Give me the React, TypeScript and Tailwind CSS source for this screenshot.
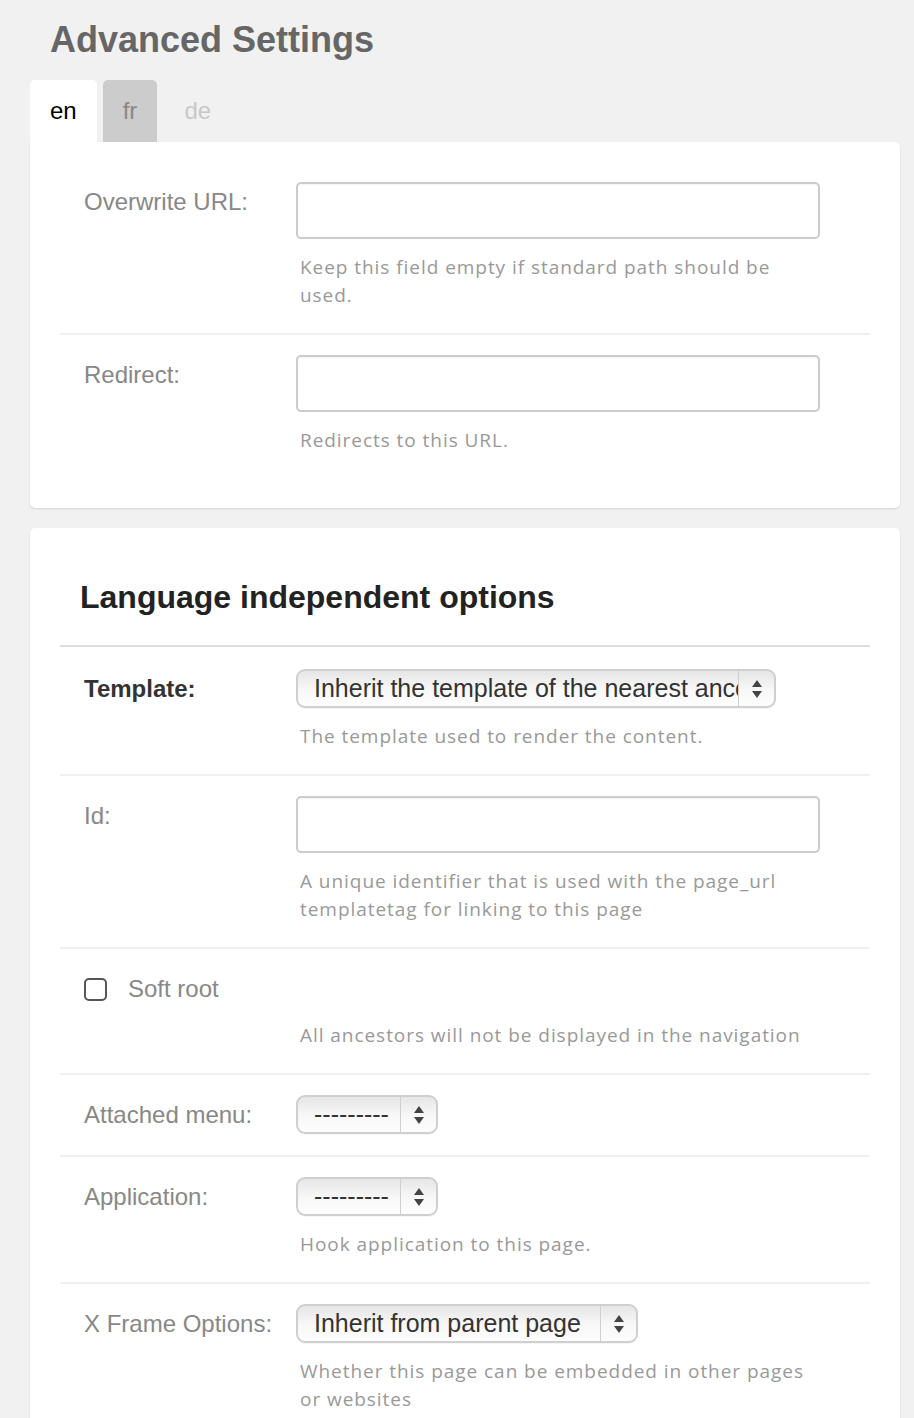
import { ReactNode } from 'react';

// ─── Shared bits ──────────────────────────────────────────────────────────────

const sans = "font-['Liberation_Sans',Arial,sans-serif]";
const helpFont = "font-['Open_Sans',sans-serif]";

function Help({ children, mt = 'mt-[14px]' }: { children: ReactNode; mt?: string }) {
    return (
        <p
            className={`${helpFont} ml-1 ${mt} w-[512px] text-[19px] leading-[28px] tracking-[0.95px] text-[#999]`}
        >
            {children}
        </p>
    );
}

function TextInput() {
    return (
        <div className="h-[57px] w-[524px] rounded-[5px] border-2 border-[#cccccc] bg-white shadow-[inset_0_1px_2px_rgba(0,0,0,0.05)]" />
    );
}

function Arrows() {
    return (
        <svg width="12" height="20" viewBox="0 0 12 20" className="block">
            <path d="M6 1 L11 8 L1 8 Z" fill="#444" />
            <path d="M6 19 L11 12 L1 12 Z" fill="#444" />
        </svg>
    );
}

function Select({ value, width }: { value: string; width: string }) {
    return (
        <div
            className={`${width} flex h-[39px] items-stretch overflow-hidden rounded-[9px] border-2 border-[#cfcfcf] bg-[linear-gradient(to_bottom,#e6e6e6,#f8f8f8_55%,#fdfdfd)] shadow-[0_1px_0_rgba(0,0,0,0.04)]`}
        >
            <div
                className={`${sans} min-w-0 flex-1 overflow-hidden whitespace-nowrap pl-4 text-[25px] leading-[35px] text-[#333]`}
            >
                {value}
            </div>
            <div className="flex w-[36px] shrink-0 items-center justify-center border-l border-[#cfcfcf]">
                <Arrows />
            </div>
        </div>
    );
}

function Row({
    label,
    bold,
    children,
    last,
    pt = 'pt-5',
    pb = 'pb-6',
}: {
    label: ReactNode;
    bold?: boolean;
    children: ReactNode;
    last?: boolean;
    pt?: string;
    pb?: string;
}) {
    return (
        <div className={`flex ${pt} ${pb} ${last ? '' : 'border-b-2 border-[#f0f0f0]'}`}>
            <div
                className={`${sans} w-[236px] shrink-0 pl-6 text-[24px] leading-[40px] ${
                    bold ? 'font-bold text-[#333]' : 'text-[#888]'
                }`}
            >
                {label}
            </div>
            <div className="flex flex-col">{children}</div>
        </div>
    );
}

// ─── Page ─────────────────────────────────────────────────────────────────────

export default function App() {
    return (
        <div className="min-h-[1418px] w-[914px] bg-[#f1f1f1] pl-[30px] pr-[14px]">
            <h1 className={`${sans} pl-5 pt-[18px] text-[36px] font-bold leading-[44px] text-[#666]`}>
                Advanced Settings
            </h1>

            {/* language tabs */}
            <div className={`${sans} mt-[18px] flex h-[62px] items-stretch text-[24px]`}>
                <div className="flex items-center rounded-t-[5px] bg-white px-5 text-black">en</div>
                <div className="ml-[6px] flex items-center rounded-t-[5px] bg-[#cccccc] px-5 text-[#888]">
                    fr
                </div>
                <div className="ml-[7px] flex items-center px-5 text-[#c8c8c8]">de</div>
            </div>

            <div className="rounded-b-[5px] rounded-tr-[5px] bg-white px-[30px] pt-5 pb-[30px] shadow-[0_1px_2px_rgba(0,0,0,0.12)]">
                <Row label="Overwrite URL:">
                    <TextInput />
                    <Help>Keep this field empty if standard path should be used.</Help>
                </Row>
                <Row label="Redirect:" last>
                    <TextInput />
                    <Help>Redirects to this URL.</Help>
                </Row>
            </div>

            <div className="mt-5 rounded-[5px] bg-white px-[30px] pb-6 shadow-[0_1px_2px_rgba(0,0,0,0.12)]">
                <div className="border-b-2 border-[#dddddd] pl-5 pt-[51px] pb-[30px]">
                    <h2 className={`${sans} text-[32px] font-bold leading-[36px] text-[#222]`}>
                        Language independent options
                    </h2>
                </div>

                <Row label="Template:" bold pt="pt-[22px]">
                    <Select value="Inherit the template of the nearest ancestor" width="w-[480px]" />
                    <Help>The template used to render the content.</Help>
                </Row>

                <Row label="Id:">
                    <TextInput />
                    <Help>A unique identifier that is used with the page_url templatetag for linking to this page</Help>
                </Row>

                <div className="border-b-2 border-[#f0f0f0] pt-5 pb-6">
                    <div className="flex h-[40px] items-center pl-6">
                        <span className="h-[23px] w-[23px] rounded-[5px] border-2 border-[#555]" />
                        <span className={`${sans} ml-[21px] text-[24px] text-[#888]`}>Soft root</span>
                    </div>
                    <div className="pl-[236px]">
                        <Help mt="mt-3">All ancestors will not be displayed in the navigation</Help>
                    </div>
                </div>

                <Row label="Attached menu:" pb="pb-[20px]">
                    <Select value="---------" width="w-[142px]" />
                </Row>

                <Row label="Application:">
                    <Select value="---------" width="w-[142px]" />
                    <Help>Hook application to this page.</Help>
                </Row>

                <Row label="X Frame Options:" last>
                    <Select value="Inherit from parent page" width="w-[342px]" />
                    <Help>Whether this page can be embedded in other pages or websites</Help>
                </Row>
            </div>
        </div>
    );
}
